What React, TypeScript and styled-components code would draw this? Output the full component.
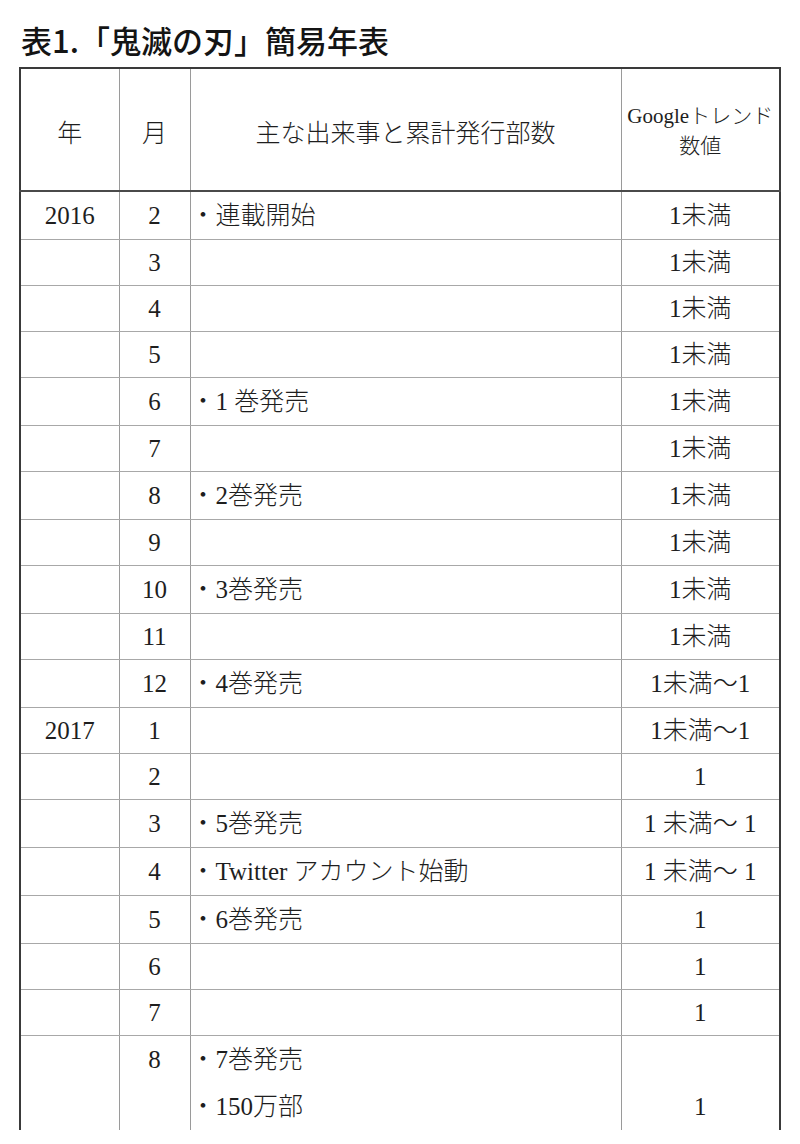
import React from "react";
import styled, { createGlobalStyle } from "styled-components";

const GlobalStyle = createGlobalStyle`
  html, body { margin: 0; padding: 0; background: #ffffff; }
  body { font-family: "Liberation Serif", "Noto Sans CJK JP", serif; color: #1e1e1e; }
`;

const Page = styled.div`
  width: 800px;
  height: 1144px;
  padding: 0 0 0 19px;
  box-sizing: border-box;
  overflow: hidden;
`;

const Title = styled.h1`
  margin: 0;
  padding: 22px 0 0 2px;
  height: 67px;
  box-sizing: border-box;
  font-family: "Noto Sans CJK JP", sans-serif;
  font-weight: 500;
  font-size: 31px;
  line-height: 36px;
  color: #141414;
  letter-spacing: 0;
  white-space: nowrap;
`;

const Table = styled.table`
  border-collapse: collapse;
  table-layout: fixed;
  width: 760px;
  font-family: "Liberation Serif", "Noto Sans CJK JP", serif;
  font-weight: 300;
  font-size: 25px;
  color: #1e1e1e;
`;

const Col = styled.col<{ $w: number }>`
  width: ${(p) => p.$w}px;
`;

const cellBase = `
  padding: 0;
  border-left: 1px solid #9a9a9a;
  border-right: 1px solid #9a9a9a;
  &:first-child { border-left: 2px solid #3a3a3a; }
  &:last-child { border-right: 2px solid #3a3a3a; }
`;

const HeadRow = styled.tr`
  height: 123px;
`;

const HeadCell = styled.th<{ $small?: boolean }>`
  ${cellBase}
  border-top: 2px solid #3a3a3a;
  border-bottom: 2px solid #4a4a4a;
  font-weight: 300;
  text-align: center;
  vertical-align: middle;
  font-size: ${(p) => (p.$small ? "21px" : "25px")};
  line-height: 30px;
  padding-top: ${(p) => (p.$small ? "2px" : "9px")};
`;

const Row = styled.tr<{ $tall?: boolean }>`
  height: ${(p) => (p.$tall ? "94px" : "46px")};
`;

const Cell = styled.td<{ $align?: "left" | "center"; $last?: boolean; $value?: boolean }>`
  ${cellBase}
  border-bottom: ${(p) => (p.$last ? "none" : "1px solid #a8a8a8")};
  text-align: ${(p) => p.$align ?? "center"};
  vertical-align: ${(p) => (p.$last ? (p.$value ? "bottom" : "top") : "middle")};
  line-height: ${(p) => (p.$last ? "47px" : "30px")};
  white-space: nowrap;
`;

const EventLine = styled.div`
  line-height: 47px;
`;

type Entry = { year?: string; month: string; events: string[]; value: string };

const rows: Entry[] = [
  { year: "2016", month: "2", events: ["・連載開始"], value: "1未満" },
  { month: "3", events: [], value: "1未満" },
  { month: "4", events: [], value: "1未満" },
  { month: "5", events: [], value: "1未満" },
  { month: "6", events: ["・1 巻発売"], value: "1未満" },
  { month: "7", events: [], value: "1未満" },
  { month: "8", events: ["・2巻発売"], value: "1未満" },
  { month: "9", events: [], value: "1未満" },
  { month: "10", events: ["・3巻発売"], value: "1未満" },
  { month: "11", events: [], value: "1未満" },
  { month: "12", events: ["・4巻発売"], value: "1未満～1" },
  { year: "2017", month: "1", events: [], value: "1未満～1" },
  { month: "2", events: [], value: "1" },
  { month: "3", events: ["・5巻発売"], value: "1 未満～ 1" },
  { month: "4", events: ["・Twitter アカウント始動"], value: "1 未満～ 1" },
  { month: "5", events: ["・6巻発売"], value: "1" },
  { month: "6", events: [], value: "1" },
  { month: "7", events: [], value: "1" },
  { month: "8", events: ["・7巻発売", "・150万部"], value: "1" },
];

export default function App() {
  return (
    <>
      <GlobalStyle />
      <Page>
        <Title>表1.「鬼滅の刃」簡易年表</Title>
        <Table>
          <colgroup>
            <Col $w={99} />
            <Col $w={71} />
            <Col $w={431} />
            <Col $w={159} />
          </colgroup>
          <thead>
            <HeadRow>
              <HeadCell>年</HeadCell>
              <HeadCell>月</HeadCell>
              <HeadCell>主な出来事と累計発行部数</HeadCell>
              <HeadCell $small>
                Googleトレンド
                <br />
                数値
              </HeadCell>
            </HeadRow>
          </thead>
          <tbody>
            {rows.map((r, i) => {
              const last = i === rows.length - 1;
              return (
                <Row key={i} $tall={last}>
                  <Cell $last={last}>{r.year ?? ""}</Cell>
                  <Cell $last={last}>{r.month}</Cell>
                  <Cell $align="left" $last={last}>
                    {r.events.map((e, j) => (
                      <EventLine key={j}>{e}</EventLine>
                    ))}
                  </Cell>
                  <Cell $last={last} $value>
                    {r.value}
                  </Cell>
                </Row>
              );
            })}
          </tbody>
        </Table>
      </Page>
    </>
  );
}
